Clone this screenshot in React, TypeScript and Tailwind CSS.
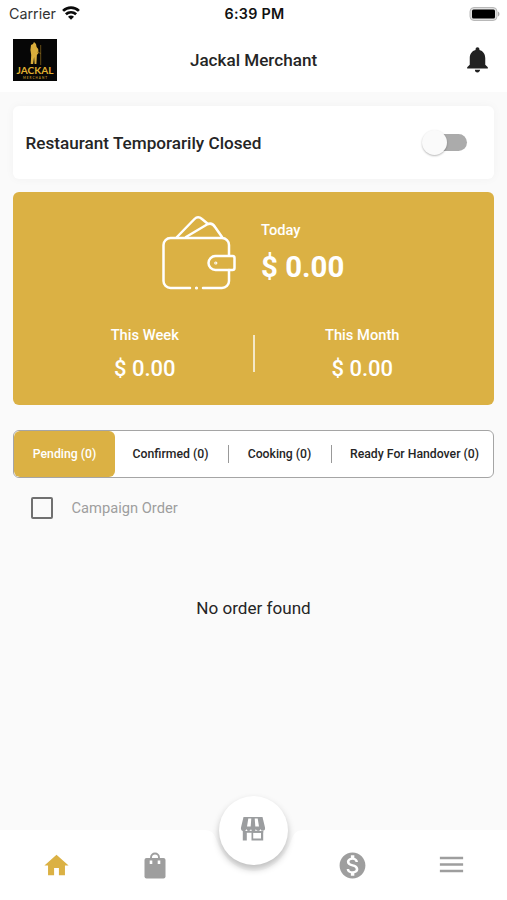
import { useState } from "react";
import { MdHome, MdMenu, MdMonetizationOn, MdNotifications } from "react-icons/md";

const tabs = [
    { label: "Pending (0)", width: "w-[101px]" },
    { label: "Confirmed (0)", width: "w-[114px] pr-[3px]" },
    { label: "Cooking (0)", width: "w-[103px] pr-[2px]" },
    { label: "Ready For Handover (0)", width: "w-[161px] pl-[4px]" },
];

function StatusBar() {
    return <div className="grid grid-cols-3 items-center h-[27px] pl-[9px] pr-[7px] text-[#111]">
        <div className="flex items-center gap-[6px]">
            <span className="pt-[2px] font-['Inter'] text-[14.3px] leading-none text-[#333]">Carrier</span>
            <svg width="18" height="14" viewBox="0 0 19 15" fill="none" stroke="#0a0a0a" strokeWidth="2.9">
                <path d="M1 5.2C5.8.5 13.2.5 18 5.2" />
                <path d="M4 8.9C7.2 6 11.8 6 15 8.9" />
                <path d="M6.3 11.5C8.2 9.8 10.8 9.8 12.700 11.5L9.5 14.8Z" fill="#0a0a0a" stroke="none" />
            </svg>
        </div>
        <span className="pt-[2px] font-['Inter'] font-semibold text-[14.3px] tracking-[0.3px] leading-none text-center">6:39 PM</span>
        <svg className="justify-self-end" width="31" height="16" viewBox="0 0 31 16">
            <rect x="1" y="1.5" width="27" height="13" rx="4" fill="#e0e0e0" stroke="#b8b8b8" />
            <rect x="3" y="3.5" width="23" height="9" rx="1.5" fill="#000" />
            <path d="M29 5.5c2 1 2 4 0 5z" fill="#aaa" />
        </svg>
    </div>
}

function Logo() {
    return <svg width="44" height="42" viewBox="0 0 44 42">
        <rect width="44" height="42" fill="#060606" />
        <path d="M20 5l1-2 2 2 .6 3 1.6 2 .3 4-1.6 2-.5 9h-1.8l-.5-7-1 7h-2.4l.5-9-.8-5 .6-5z" fill="#d9ad3c" />
        <path d="M24 13l4 1.5M27.7 6v20" stroke="#8f6d1c" strokeWidth=".7" />
        <text x="22" y="35.3" textAnchor="middle" textLength="37" lengthAdjust="spacingAndGlyphs" className="font-['Lato'] font-bold text-[9px]" fill="#e0b030">JACKAL</text>
        <text x="22" y="39.6" textAnchor="middle" textLength="24" className="font-['Lato'] font-bold text-[3px]" fill="#b18a28">MERCHANT</text>
    </svg>
}

function Wallet() {
    return <svg width="76" height="76" viewBox="0 0 76 76" fill="none" stroke="white" strokeWidth="2.5" strokeLinecap="round" strokeLinejoin="round">
        <path d="M29 73H9.5a7 7 0 0 1-7-7V30a7 7 0 0 1 7-7H61a7 7 0 0 1 7 7V40M68 55V66a7 7 0 0 1-7 7H42" />
        <path d="M68 41H54.5a7 7 0 0 0 0 14H71.5a2 2 0 0 0 2-2V43a2 2 0 0 0-2-2z" />
        <path d="M16 22L33.5 4Q37 .5 41 4L47 9M25 22L46 9.5Q51 7 54 12L61 22" />
        <circle cx="54.8" cy="48" r=".5" strokeWidth="2.2" />
        <circle cx="35.5" cy="73" r=".7" strokeWidth="1.8" />
    </svg>
}

function Amount({ title }: { title: string }) {
    return <div className="grow basis-0 flex flex-col items-center font-medium">
        <p className="text-[14.7px] leading-[18px]">{title}</p>
        <p className="mt-[11px] text-[22px] leading-[28px]">$ 0.00</p>
    </div>
}

function BagIcon() {
    return <svg width="22" height="27" viewBox="0 0 22 27">
        <path d="M7 7V5.5a4 4 0 0 1 8 0V7" fill="none" stroke="#9e9e9e" strokeWidth="1.9" />
        <rect x=".5" y="6" width="21" height="20.5" rx="2" fill="#9e9e9e" />
        <path d="M5.7 8.5h2.6v3.5h-2.600zM13.7 8.5h2.6v3.5h-2.600z" fill="white" />
    </svg>
}

function StoreIcon() {
    return <svg className="mb-[3px]" width="26" height="25" viewBox="0 0 26 25" fill="#9b9d9f">
        <path fillRule="evenodd" d="M3.500 1h19L25 11.500v1H1v-1zM8.300 2.500L7 10.500h3.700L11.300 2.500zM14.700 2.500l.6 8H19L17.700 2.500z" />
        <path d="M1 12h24a2.300 2.300 0 0 1-4.500 1 2.400 2.400 0 0 1-4.700 0 2.400 2.400 0 0 1-4.800 0 2.400 2.400 0 0 1-4.700 0A2.300 2.300 0 0 1 1 12z" />
        <path d="M2.800 15h20.400v1.800H2.800zM2.800 16h4v8.500h-4z" />
        <path fillRule="evenodd" d="M11.500 15h11.700v9.500H11.500zM13.200 16.800v5.700h7.800v-5.700z" />
    </svg>
}

function BottomNav() {
    return <nav className="relative flex h-[70px]">
        <div className="grow basis-0 bg-white" />
        <svg width="100" height="70" viewBox="0 0 100 70" fill="white">
            <path d="M0 0C9 0 10 4 13 11C19 28 33 41 50 41S81 28 87 11C90 4 91 0 100 0V70H0Z" />
        </svg>
        <div className="grow basis-0 bg-white" />
        <div className="absolute inset-0 grid grid-cols-5 items-center justify-items-center px-[7px] text-[#9e9e9e]">
            <MdHome size={29} className="text-[#dbb144]" />
            <BagIcon />
            <button className="flex items-center justify-center size-[69px] -translate-y-[35px] rounded-full bg-white shadow-[0_4px_7px_rgba(0,0,0,0.25)]">
                <StoreIcon />
            </button>
            <MdMonetizationOn size={31} />
            <MdMenu size={31} className="translate-x-px -translate-y-px" />
        </div>
    </nav>
}

export default function App() {
    const [active, setActive] = useState(0);
    const [campaign, setCampaign] = useState(false);

    return <div className="flex flex-col w-[507px] h-[900px] overflow-hidden bg-[#fafafa] font-['Roboto',sans-serif] text-[#252525]">
        <header className="h-[92px] shrink-0 bg-white">
            <StatusBar />
            <div className="grid grid-cols-[44px_1fr_44px] items-center h-[65px] px-[13px]">
                <Logo />
                <h1 className="pt-[2px] text-center font-medium text-[17.1px]">Jackal Merchant</h1>
                <MdNotifications size={31} className="justify-self-end mr-px text-[#212121]" />
            </div>
        </header>

        <main className="grow px-[13px] pt-[14px]">
            <div className="flex items-center justify-between h-[73px] pl-[12.5px] pr-[27px] rounded-md bg-white shadow-[0_0_10px_rgba(0,0,0,0.04)]">
                <h2 className="pt-[2px] font-medium text-[17.15px]">Restaurant Temporarily Closed</h2>
                <div className="flex items-center w-[40px] h-[17px] rounded-full bg-[#ababab]">
                    <div className="shrink-0 size-[25px] -ml-[5px] rounded-full bg-[#fafafa] shadow-[0_1px_2px_rgba(0,0,0,0.28)]" />
                </div>
            </div>

            <section className="h-[213px] mt-[13px] pt-[23px] rounded-md bg-[#dbb144] text-white">
                <div className="flex pl-[148px]">
                    <Wallet />
                    <div className="pl-[24px] pt-[6px]">
                        <p className="font-medium text-[14.7px] leading-[18px]">Today</p>
                        <p className="mt-[10px] font-bold text-[29.4px] leading-[36px]">$ 0.00</p>
                    </div>
                </div>
                <div className="flex items-center mt-[35px] px-[24px]">
                    <Amount title="This Week" />
                    <div className="w-[2px] h-[37px] mb-[3px] bg-white/70" />
                    <Amount title="This Month" />
                </div>
            </section>

            <div className="flex h-[48px] mt-[25px] rounded-md border border-[#a5a5a5] bg-white overflow-hidden">
                {tabs.map((tab, i) =>
                    <button key={tab.label} onClick={() => setActive(i)}
                        className={`relative shrink-0 font-medium text-[12.25px] ${tab.width} ${i === active ? "rounded-md bg-[#dbb144] text-white" : ""}`}>
                        {tab.label}
                        {i > 0 && i < 3 && <span className="absolute right-0 top-[14px] w-px h-[18px] bg-[#999]" />}
                    </button>
                )}
            </div>

            <label className="flex items-center h-[22px] mt-[19px] pl-[18px] text-[14.7px] text-[#9e9e9e]">
                <input type="checkbox" checked={campaign} onChange={(e) => setCampaign(e.target.checked)}
                    className="appearance-none size-[22px] mr-[18.5px] border-2 border-[#707070] rounded-[2px] checked:bg-[#dbb144]" />
                Campaign Order
            </label>

            <p className="mt-[77px] text-center text-[17.1px]">No order found</p>
        </main>

        <BottomNav />
    </div>
}
